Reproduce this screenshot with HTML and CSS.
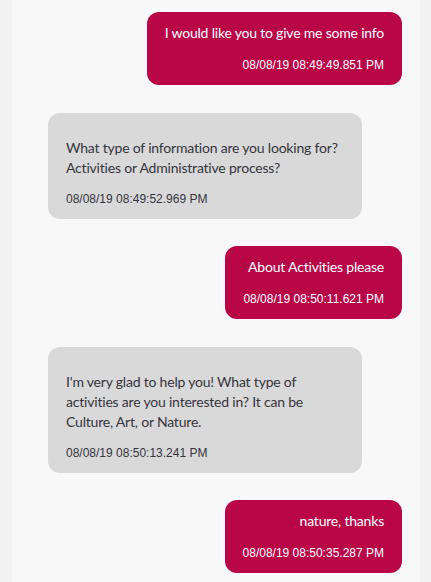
FILE: index.html
```html
<!DOCTYPE html>
<html>
<head>
<meta charset="utf-8">
<link rel="stylesheet" href="styles.css">
</head>
<body>
<div class="panel">
  <div class="row user">
    <div class="bubble">
      <div class="text">I would like you to give me some info</div>
      <div class="time">08/08/19 08:49:49.851 PM</div>
    </div>
  </div>
  <div class="row bot">
    <div class="bubble">
      <div class="text">What type of information are you looking for? Activities or Administrative process?</div>
      <div class="time">08/08/19 08:49:52.969 PM</div>
    </div>
  </div>
  <div class="row user">
    <div class="bubble">
      <div class="text">About Activities please</div>
      <div class="time">08/08/19 08:50:11.621 PM</div>
    </div>
  </div>
  <div class="row bot">
    <div class="bubble">
      <div class="text">I'm very glad to help you! What type of activities are you interested in? It can be Culture, Art, or Nature.</div>
      <div class="time">08/08/19 08:50:13.241 PM</div>
    </div>
  </div>
  <div class="row user">
    <div class="bubble">
      <div class="text">nature, thanks</div>
      <div class="time">08/08/19 08:50:35.287 PM</div>
    </div>
  </div>
</div>
</body>
</html>
```
FILE: styles.css
```css
html, body {
  margin: 0;
  padding: 0;
  background: #f2f2f2;
  height: 100%;
}
.panel {
  margin: 0 11px 0 12px;
  min-height: 100%;
  box-sizing: border-box;
  background: #f8f8f8;
  padding: 12px 18px 9px 36px;
  display: flex;
  flex-direction: column;
  gap: 27.5px;
}
.row {
  display: flex;
}
.row.user {
  justify-content: flex-end;
}
.row.bot {
  justify-content: flex-start;
}
.bubble {
  max-width: 314px;
  box-sizing: border-box;
  border-radius: 12px;
  padding: 11px 18px 13px;
}
.user .bubble {
  background: #b80647;
  color: #ffffff;
  text-align: right;
}
.bot .bubble {
  background: #d9d9d9;
  color: #35353d;
  padding-top: 25px;
}
.text {
  font-family: Lato, "Open Sans", sans-serif;
  font-size: 14px;
  line-height: 20px;
  letter-spacing: -0.2px;
}
.time {
  font-family: "Liberation Sans", Arial, sans-serif;
  font-size: 12px;
  line-height: 14px;
  margin-top: 15px;
}
.bot .time {
  margin-top: 14px;
}
```
